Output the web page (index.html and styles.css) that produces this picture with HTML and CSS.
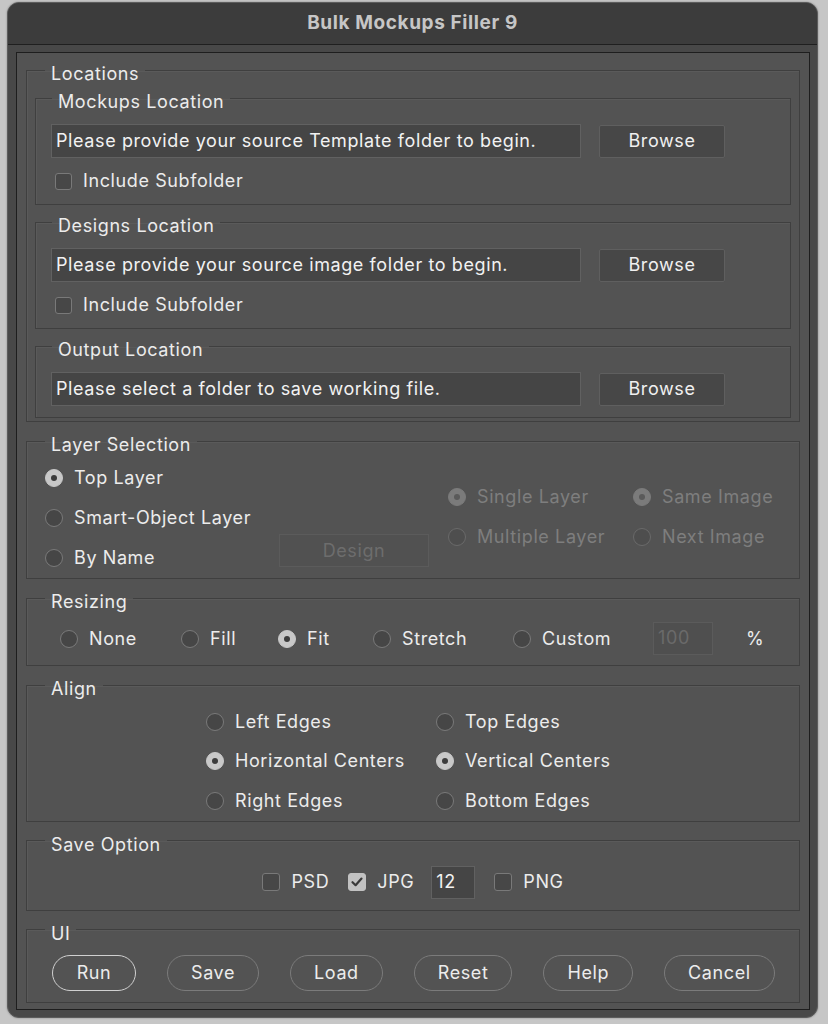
FILE: index.html
```html
<!DOCTYPE html>
<html lang="en">
<head>
<meta charset="utf-8">
<title>Bulk Mockups Filler 9</title>
<link rel="stylesheet" href="styles.css">
</head>
<body>
<div class="window">
  <div class="titlebar">Bulk Mockups Filler 9</div>
  <div class="panel">

    <fieldset class="group">
      <legend>Locations</legend>
      <div class="loc-body">
        <fieldset class="group sub">
          <legend>Mockups Location</legend>
          <div class="sub-body">
            <div class="path-row">
              <div class="field path">Please provide your source Template folder to begin.</div>
              <button class="browse">Browse</button>
            </div>
            <div class="check-row"><span class="box"></span><span>Include Subfolder</span></div>
          </div>
        </fieldset>
        <fieldset class="group sub">
          <legend>Designs Location</legend>
          <div class="sub-body">
            <div class="path-row">
              <div class="field path">Please provide your source image folder to begin.</div>
              <button class="browse">Browse</button>
            </div>
            <div class="check-row"><span class="box"></span><span>Include Subfolder</span></div>
          </div>
        </fieldset>
        <fieldset class="group sub">
          <legend>Output Location</legend>
          <div class="sub-body out-body">
            <div class="path-row">
              <div class="field path">Please select a folder to save working file.</div>
              <button class="browse">Browse</button>
            </div>
          </div>
        </fieldset>
      </div>
    </fieldset>

    <fieldset class="group">
      <legend>Layer Selection</legend>
      <div class="layer-body">
        <div class="layer-col">
          <div class="opt"><span class="radio on"></span><span>Top Layer</span></div>
          <div class="opt"><span class="radio"></span><span>Smart-Object Layer</span></div>
          <div class="opt"><span class="radio"></span><span>By Name</span></div>
        </div>
        <button class="design" disabled>Design</button>
        <div class="layer-grid">
          <div class="opt dis"><span class="radio on"></span><span>Single Layer</span></div>
          <div class="opt dis"><span class="radio on"></span><span>Same Image</span></div>
          <div class="opt dis"><span class="radio"></span><span>Multiple Layer</span></div>
          <div class="opt dis"><span class="radio"></span><span>Next Image</span></div>
        </div>
      </div>
    </fieldset>

    <fieldset class="group">
      <legend>Resizing</legend>
      <div class="resize-body">
        <div class="opt"><span class="radio"></span><span>None</span></div>
        <div class="opt"><span class="radio"></span><span>Fill</span></div>
        <div class="opt"><span class="radio on"></span><span>Fit</span></div>
        <div class="opt"><span class="radio"></span><span>Stretch</span></div>
        <div class="opt"><span class="radio"></span><span>Custom</span></div>
        <div class="field pct">100</div>
        <span class="pct-sign">%</span>
      </div>
    </fieldset>

    <fieldset class="group">
      <legend>Align</legend>
      <div class="align-body">
        <div class="opt"><span class="radio"></span><span>Left Edges</span></div>
        <div class="opt"><span class="radio"></span><span>Top Edges</span></div>
        <div class="opt"><span class="radio on"></span><span>Horizontal Centers</span></div>
        <div class="opt"><span class="radio on"></span><span>Vertical Centers</span></div>
        <div class="opt"><span class="radio"></span><span>Right Edges</span></div>
        <div class="opt"><span class="radio"></span><span>Bottom Edges</span></div>
      </div>
    </fieldset>

    <fieldset class="group">
      <legend>Save Option</legend>
      <div class="save-body">
        <div class="opt"><span class="box"></span><span>PSD</span></div>
        <div class="opt"><span class="box on"><svg viewBox="0 0 18 18" width="18" height="18"><path d="M4.5 9.2 L7.6 12.2 L13.5 5.6" fill="none" stroke="#3a3a3a" stroke-width="2.2" stroke-linecap="round" stroke-linejoin="round"/></svg></span><span>JPG</span></div>
        <div class="field quality">12</div>
        <div class="opt"><span class="box"></span><span>PNG</span></div>
      </div>
    </fieldset>

    <fieldset class="group">
      <legend>UI</legend>
      <div class="ui-body">
        <button class="pill primary">Run</button>
        <button class="pill">Save</button>
        <button class="pill">Load</button>
        <button class="pill">Reset</button>
        <button class="pill">Help</button>
        <button class="pill">Cancel</button>
      </div>
    </fieldset>

  </div>
</div>
</body>
</html>
```

FILE: styles.css
```css
* { box-sizing: border-box; }

html, body {
  margin: 0;
  padding: 0;
  background: #c6c6c6;
}

body {
  font-family: Inter, "Noto Sans", "Liberation Sans", sans-serif;
  font-size: 18px;
  line-height: 22px;
  letter-spacing: 0.6px;
  color: #ececec;
  padding: 2px 0 0 7px;
  height: 1024px;
}

.window {
  width: 811px;
  height: 1016px;
  background: #484848;
  border-radius: 12px;
  border: 1px solid #5c5c5c;
  overflow: hidden;
  box-shadow: 0 0 2px rgba(0,0,0,0.35);
}

.titlebar {
  height: 42px;
  background: #3c3c3c;
  border-bottom: 1px solid #1f1f1f;
  color: #c6c6c6;
  font-weight: 700;
  font-size: 19px;
  letter-spacing: 0.6px;
  text-align: center;
  line-height: 40px;
}

.panel {
  margin: 7px 7px 0 8px;
  height: 958px;
  background: #535353;
  border: 1px solid #1e1e1e;
  padding: 6px 9px 7px 9px;
}

.group {
  margin: 0 0 8px 0;
  padding: 0;
  min-width: 0;
  border: 1px solid #3f3f3f;
  box-shadow: 1px 1px 0 #5a5a5a inset;
}

.group > legend {
  margin-left: 18px;
  padding: 0 6px;
  height: 22px;
  line-height: 29px;
  color: #ececec;
}

.group.sub > legend {
  margin-left: 16px;
}

.loc-body {
  padding: 6px 8px 3px 8px;
}

.group.sub {
  margin-bottom: 6px;
}
.group.sub:last-child {
  margin-bottom: 0;
}

.sub-body {
  padding: 15px 15px 12px 15px;
}
.sub-body.out-body {
  padding-bottom: 11px;
}

.path-row {
  display: flex;
  align-items: center;
  gap: 18px;
}

.field {
  background: #454545;
  border: 1px solid #616161;
  color: #f2f2f2;
  white-space: nowrap;
  overflow: hidden;
}

.field.path {
  width: 530px;
  height: 34px;
  line-height: 31px;
  padding-left: 4px;
}

.browse {
  width: 126px;
  height: 33px;
  background: #474747;
  border: 1px solid #5f5f5f;
  border-radius: 2px;
  color: #f0f0f0;
  font: inherit;
  letter-spacing: inherit;
  padding: 0;
}

.check-row {
  display: flex;
  align-items: center;
  gap: 11px;
  margin-top: 12px;
  padding-left: 4px;
}

.box {
  width: 17px;
  height: 17px;
  flex: none;
  display: inline-block;
  background: #474747;
  border: 1px solid #797979;
  border-radius: 3px;
  position: relative;
}
.box.on {
  background: #c2c2c2;
  border-color: #c2c2c2;
}
.box.on svg {
  position: absolute;
  left: -1px;
  top: -1px;
}

.opt {
  display: flex;
  align-items: center;
  gap: 11px;
  white-space: nowrap;
}

.radio {
  width: 18px;
  height: 18px;
  flex: none;
  border-radius: 50%;
  background: #464646;
  border: 1px solid #7a7a7a;
  position: relative;
}
.radio.on {
  background: #c8c8c8;
  border-color: #c8c8c8;
}
.radio.on::after {
  content: "";
  position: absolute;
  left: 5px;
  top: 5px;
  width: 6px;
  height: 6px;
  border-radius: 50%;
  background: #3c3c3c;
}

.opt.dis { color: #7e7e7e; }
.opt.dis .radio {
  background: #4e4e4e;
  border-color: #6a6a6a;
}
.opt.dis .radio.on {
  background: #7b7b7b;
  border-color: #7b7b7b;
}
.opt.dis .radio.on::after { background: #5a5a5a; }

/* Layer selection */
.layer-body {
  display: flex;
  padding: 6px 0 0 18px;
}
.layer-col {
  width: 234px;
  display: grid;
  grid-auto-rows: 40px;
  align-items: center;
}
.design {
  align-self: flex-end;
  margin-bottom: 11px;
  width: 150px;
  height: 33px;
  background: #515151;
  border: 1px solid #5b5b5b;
  color: #6d6d6d;
  font: inherit;
  letter-spacing: inherit;
  padding: 0;
}
.layer-grid {
  margin: 19px 0 0 19px;
  display: grid;
  grid-template-columns: 185px auto;
  grid-auto-rows: 40px;
  align-items: center;
}

/* Resizing */
.resize-body {
  display: grid;
  grid-template-columns: 121px 97px 95px 140px 140px 60px auto;
  align-items: center;
  padding: 13px 0 10px 33px;
}
.field.pct {
  height: 33px;
  line-height: 30px;
  padding-left: 4px;
  background: #4f4f4f;
  border-color: #5b5b5b;
  color: #6a6a6a;
}
.pct-sign {
  margin-left: 33px;
}

/* Align */
.align-body {
  display: grid;
  grid-template-columns: 230px auto;
  grid-auto-rows: 39.5px;
  align-items: center;
  padding: 6px 0 0 179px;
}

/* Save option */
.save-body {
  display: flex;
  justify-content: center;
  align-items: center;
  padding: 14px 0 11px 0;
  gap: 19px;
}
.save-body .box { width: 18px; height: 18px; }
.field.quality {
  width: 44px;
  height: 33px;
  line-height: 30px;
  padding-left: 4px;
  margin-left: -2px;
}

/* UI buttons */
.ui-body {
  display: flex;
  gap: 31px;
  padding: 14px 0 11px 25px;
}
.pill {
  height: 36px;
  padding: 0 23px;
  min-width: 84px;
  border-radius: 18px;
  background: #535353;
  border: 1px solid #7b7b7b;
  color: #ececec;
  font: inherit;
  letter-spacing: inherit;
}
.pill.primary {
  border: 1.5px solid #d0d0d0;
}
```
